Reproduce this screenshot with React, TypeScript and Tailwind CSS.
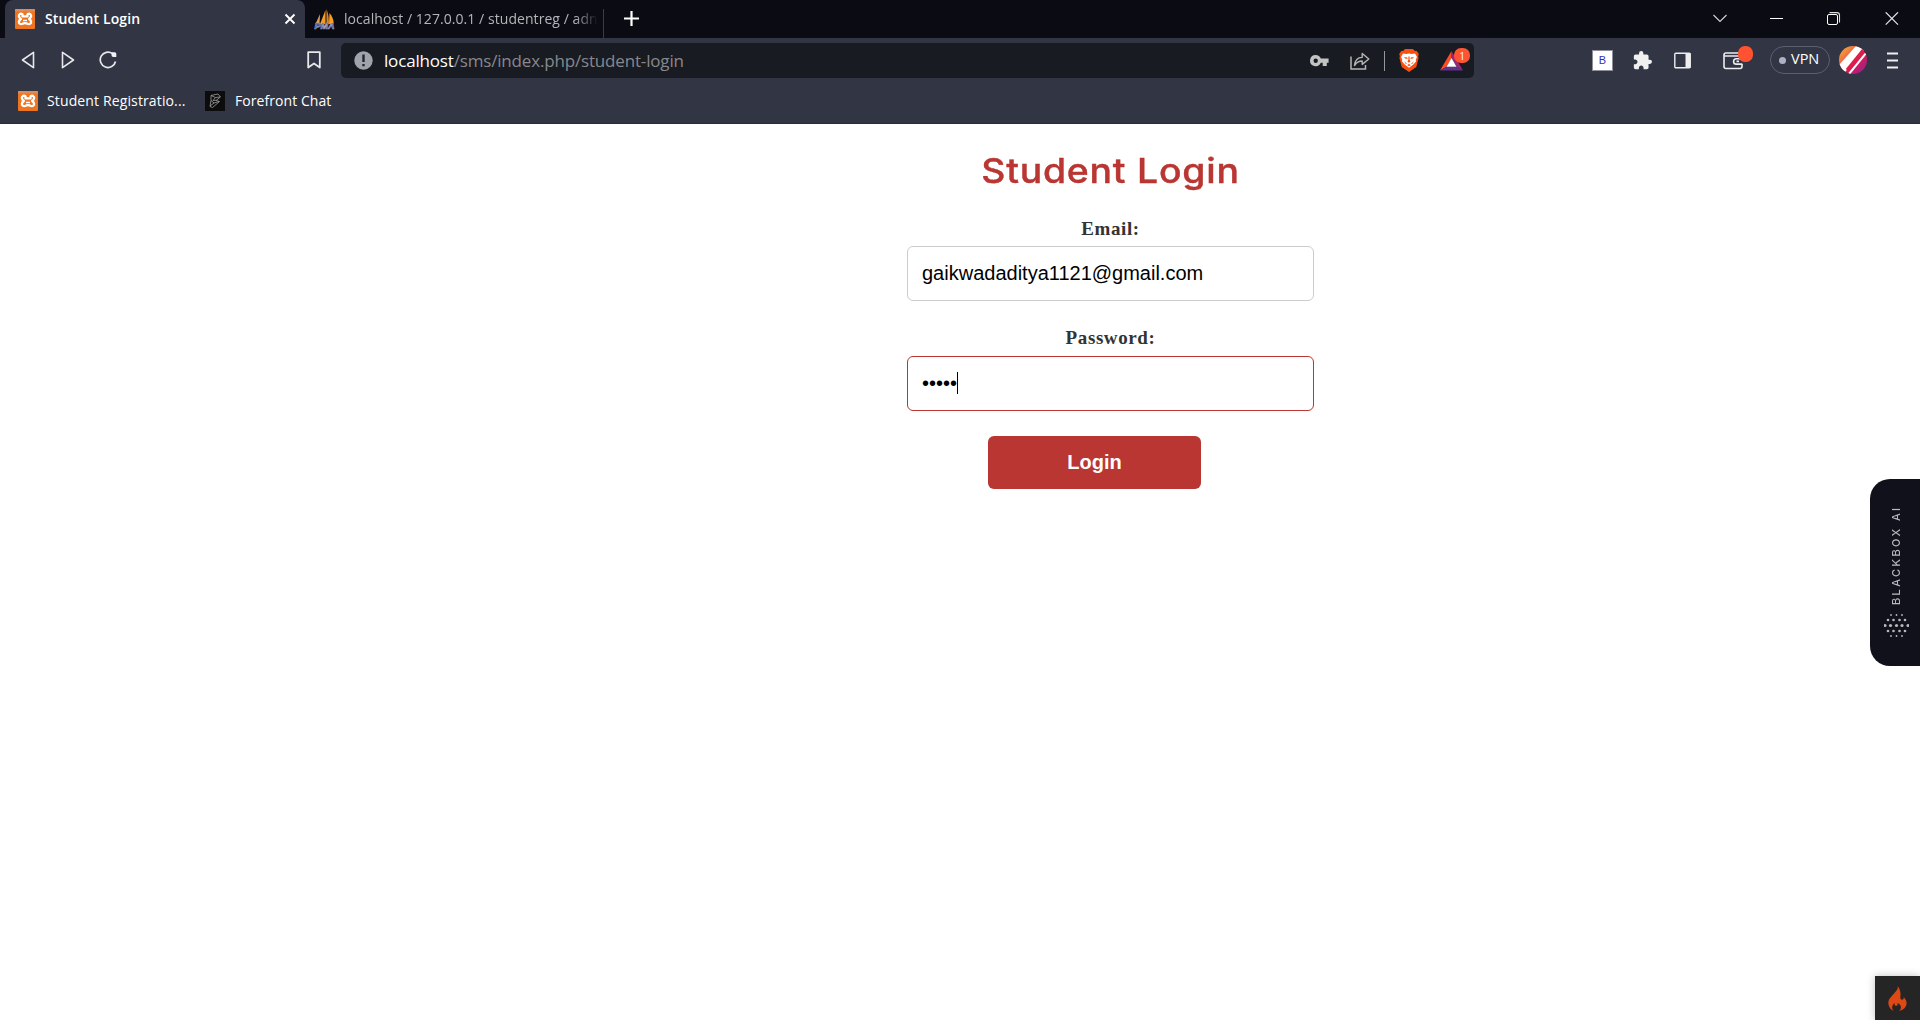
import React from "react";

const ui = "font-['Open_Sans','Noto_Sans',sans-serif]";

function XamppIcon() {
  return (
    <svg width="20" height="20" viewBox="0 0 20 20" className="shrink-0">
      <rect width="20" height="20" rx="1" fill="#ee7420" />
      <rect x="0" y="0" width="20" height="2.500" rx="1" fill="#dd8c58" />
      <path
        d="M7.500 5.200C5.200 4 3.600 5.600 3.900 7.300c.2 1.200 1 2 2 2.700-1 .7-1.800 1.500-2 2.700-.3 1.900 1.800 3 3.600 2.100 1.200-.8 3.800-.8 5 0 1.800.9 3.900-.2 3.600-2.100-.2-1.200-1-2-2-2.700 1-.7 1.800-1.500 2-2.700.3-1.700-1.300-3.300-3.600-2.100v2.200H7.500z"
        fill="none"
        stroke="#fff"
        strokeWidth="2.300"
        strokeLinejoin="round"
      />
      <path d="M8 11.500h4" stroke="#fff" strokeWidth="1.500" />
    </svg>
  );
}

function PmaIcon() {
  return (
    <svg width="22" height="21" viewBox="0 0 22 21" className="shrink-0">
      <path d="M6 5L1.500 15h4z" fill="#d9a05c" />
      <path d="M11.500 1L6 15h5.500z" fill="#f59a22" />
      <path d="M12.500 0c1 3 2.500 6 2.500 15h-2.500z" fill="#e0821c" />
      <path d="M15.500 4c2.500 2.500 4 6.500 4.300 10.500L15 15z" fill="#f99e1f" />
      <text x="0.500" y="20" fontSize="9" fontWeight="700" fontStyle="italic" textLength="20" lengthAdjust="spacingAndGlyphs" fontFamily="Liberation Sans, sans-serif" fill="#232b63" stroke="#a9aed0" strokeWidth=".6">
        PMA
      </text>
    </svg>
  );
}

function TabBar() {
  return (
    <div className="flex h-[38px] bg-[#0b0b14] pl-[5px]">
      <div className="flex w-[300px] items-center rounded-t-lg bg-[#323544] pl-[10px] pr-[8px]">
        <XamppIcon />
        <span className="mb-[2px] ml-[10px] flex-1 whitespace-nowrap text-[14px] font-semibold tracking-[0.12px] text-white">Student Login</span>
        <svg width="12" height="12" viewBox="0 0 12 12" className="mr-px">
          <path d="M1.500 1.500l9 9M10.500 1.500l-9 9" stroke="#fff" strokeWidth="1.900" />
        </svg>
      </div>
      <div className="flex w-[299px] items-center pl-[9px]">
        <PmaIcon />
        <span className="mb-[2px] ml-[8px] w-[254px] overflow-hidden whitespace-nowrap text-[14px] tracking-[0.06px] text-[#b5b5b9] [mask-image:linear-gradient(to_right,#000_91%,transparent)]">
          localhost / 127.0.0.1 / studentreg / adn
        </span>
      </div>
      <div className="mt-[9px] h-[29px] w-px shrink-0 -ml-[1px] bg-[#3c3c42]" />
      <svg width="15" height="15" viewBox="0 0 15 15" className="ml-[20px] mt-[11px]">
        <path d="M7.500 0v15M0 7.500h15" stroke="#fff" strokeWidth="2.200" />
      </svg>
      <div className="ml-auto flex pt-[12px]">
        <svg width="14" height="14" viewBox="0 0 14 14" className="mr-[43px]">
          <path d="M.5 3L7 9.500l6.500-6.500" fill="none" stroke="#d5d5d8" strokeWidth="1.100" />
        </svg>
        <svg width="13" height="14" viewBox="0 0 13 14" className="mr-[44px]">
          <path d="M0 6.500h13" stroke="#fff" />
        </svg>
        <svg width="14" height="14" viewBox="0 0 14 14" className="mr-[44px]">
          <rect x=".5" y="2.500" width="10" height="10" rx="1.500" fill="none" stroke="#fff" />
          <path d="M2.500 .6h7.500a2.500 2.500 0 012.500 2.500V10.500" fill="none" stroke="#ddd" strokeWidth="1.100" />
        </svg>
        <svg width="14" height="14" viewBox="0 0 14 14" className="mr-[21px]">
          <path d="M.7.300l12.300 12.300M13 .300L.7 12.600" stroke="#e6e6e8" strokeWidth="1.200" />
        </svg>
      </div>
    </div>
  );
}

function BraveIcon() {
  return (
    <svg width="20" height="23" viewBox="0 0 20 23">
      <path d="M4.500 1.800L6 0h8l1.500 1.800 2.300.2 2 3-.7 2.200.5 1.600-2.300 9.200L10 23l-7.300-5L.4 8.800.9 7.200.2 5l2-3z" fill="#f9500f" />
      <path d="M4 4.500l3.500.5L10 4.400l2.500.6 3.500-.5 2 3.500-1.200 2.600.2 2-2.700 2.900L10 18.800l-4.300-3.300L3 12.600l.2-2L2 8z" fill="#fff" />
      <path d="M5 8l3.200.5.3 1.400-2.300-.3zM15 8l-3.200.5-.3 1.400 2.300-.3zM8.500 12.800l1.500.9 1.500-.9-.9-2.300V7.500H9.400v3zM5.200 12l1.600 1.800 1.500.7-1.800.3zM14.800 12l-1.600 1.800-1.500.7 1.800.3zM8.200 16l1.800-.9 1.800.9-1.800 1.200z" fill="#f9500f" />
    </svg>
  );
}

function AddressBar() {
  return (
    <div className="ml-[20px] flex h-[35px] w-[1133px] items-center rounded-[5px] bg-[#191b22] pl-[13px]">
      <svg width="19" height="19" viewBox="0 0 19 19">
        <circle cx="9.500" cy="9.500" r="9.200" fill="#a1a3ac" />
        <path d="M9.500 3.500v7.500M9.500 13v2.300" stroke="#24262e" strokeWidth="2.400" />
      </svg>
      <div className="ml-[11px] whitespace-nowrap text-[17px] leading-none tracking-[-0.17px] text-[#87888d]">
        <span className="text-white">localhost</span>/sms/index.php/student-login
      </div>
      <div className="ml-auto flex items-center">
        <svg width="19" height="12" viewBox="0 0 19 12" className="mr-[21px]">
          <path fillRule="evenodd" d="M5.700 0a5.600 5.600 0 015.100 3.600H18.600v4.200h-1.800V11h-4.100V7.800h-1.900A5.600 5.600 0 115.700 0zM5.700 3.500a2.200 2.200 0 100 4.400 2.200 2.200 0 000-4.400z" fill="#c3c3c3" />
        </svg>
        <svg width="20" height="18" viewBox="0 0 20 18" className="mr-[14px]">
          <path d="M1 4.500V17h14.500v-4" fill="none" stroke="#b5b5b7" strokeWidth="1.500" />
          <path d="M4.500 13.500C5 8.500 8 5.500 12.200 5.400V1.500L18.800 7l-6.600 5.400V9C8.800 9 6.500 10.400 4.500 13.500z" fill="none" stroke="#b5b5b7" strokeWidth="1.400" strokeLinejoin="round" />
        </svg>
        <div className="mr-[14px] h-[20px] w-px bg-[#97979b]" />
        <BraveIcon />
        <div className="relative ml-[21px] mr-[4px] h-[23px] w-[30px]">
          <svg width="23" height="20" viewBox="0 0 23 20" className="mt-[2px]">
            <path d="M11.500 0L0 19.500l6.500-3.700 5-8.800z" fill="#ff4c28" />
            <path d="M11.500 0L23 19.500l-6.500-3.700-5-8.800z" fill="#962a78" />
            <path d="M0 19.500h23l-6.500-3.700h-10z" fill="#61318f" />
            <path d="M11.500 7l5 8.800h-10z" fill="#fff" />
          </svg>
          <div className="absolute left-[14px] top-[-1px] flex h-[15px] w-[16px] items-center justify-center rounded-[7px] bg-[#ff5431] text-[10px] leading-none text-white">1</div>
        </div>
      </div>
    </div>
  );
}

function Toolbar() {
  return (
    <div className="flex h-[45px] items-center">
      <svg width="14" height="18" viewBox="0 0 14 18" className="mb-px ml-[21px]">
        <path d="M12.500 1.300v15.400L1.500 9z" fill="none" stroke="#e8e8eb" strokeWidth="1.600" strokeLinejoin="round" />
      </svg>
      <svg width="14" height="18" viewBox="0 0 14 18" className="mb-px ml-[26px]">
        <path d="M1.500 1.300v15.400L12.500 9z" fill="none" stroke="#e8e8eb" strokeWidth="1.600" strokeLinejoin="round" />
      </svg>
      <svg width="18" height="18" viewBox="0 0 18 18" className="mb-px ml-[24px]">
        <path d="M13.500 2.600A7.700 7.700 0 1016.500 10.500" fill="none" stroke="#e8e8eb" strokeWidth="1.700" />
        <path d="M12.500 1.200h3.200a1.600 1.600 0 011.600 1.600V6h-3a1.800 1.800 0 01-1.800-1.800z" fill="#f2f2f4" />
      </svg>
      <svg width="14" height="18" viewBox="0 0 14 18" className="mb-px ml-[190px]">
        <path d="M1.200 1.200h11.600v15.300L7 12.500l-5.800 4z" fill="none" stroke="#e8e8eb" strokeWidth="1.800" strokeLinejoin="round" />
      </svg>
      <AddressBar />
      <div className="ml-auto flex items-center">
        <div className="mr-[20px] flex h-[21px] w-[21px] items-center justify-center border border-[#8e8f98] bg-white font-['Liberation_Sans',sans-serif] text-[11px] text-[#3430b5]">B</div>
        <svg width="19" height="19" viewBox="1 1 22 22" className="mr-[22px]">
          <path d="M20.500 11H19V7c0-1.100-.9-2-2-2h-4V3.500a2.500 2.500 0 00-5 0V5H4c-1.100 0-2 .9-2 2v3.800h1.500c1.500 0 2.700 1.200 2.700 2.700s-1.200 2.700-2.700 2.700H2V20c0 1.100.9 2 2 2h3.800v-1.500c0-1.500 1.200-2.700 2.700-2.700s2.700 1.200 2.700 2.700V22H17c1.100 0 2-.9 2-2v-4h1.500a2.500 2.500 0 000-5z" fill="#f0f0f0" />
        </svg>
        <svg width="17" height="17" viewBox="0 0 17 17" className="mb-px mr-[32px]">
          <rect x=".8" y="1.300" width="15.400" height="14.400" rx="1" fill="none" stroke="#eee" strokeWidth="1.400" />
          <rect x="11.500" y="1" width="5" height="15" fill="#eee" />
        </svg>
        <div className="relative mr-[17px] h-[19px] w-[30px]">
          <svg width="20" height="19" viewBox="0 0 20 19">
            <path d="M19 8V5.500A2.500 2.500 0 0016.500 2H3a2 2 0 00-2 2v11.500a2 2 0 002 2h14a2 2 0 002-2V13M1 5h17" fill="none" stroke="#ededf0" strokeWidth="1.600" />
            <path d="M19.300 7.700h-6a2.700 2.700 0 000 5.400h6M16 10.400h-2.500" fill="none" stroke="#ededf0" strokeWidth="1.600" />
          </svg>
          <div className="absolute left-[15px] top-[-5px] h-[16px] w-[15px] rounded-[7px] bg-[#ff5230]" />
        </div>
        <div className="mb-px mr-[9px] flex h-[28px] w-[60px] items-center rounded-full border border-[#5c5f70] pl-[8px]">
          <div className="h-[7px] w-[7px] rounded-full bg-[#aeb0c3]" />
          <span className="mb-px ml-[5px] text-[14.500px] leading-none text-white">VPN</span>
        </div>
        <svg width="28" height="28" viewBox="0 0 28 28" className="mb-px mr-[20px]">
          <defs>
            <clipPath id="avatar"><circle cx="14" cy="14" r="14" /></clipPath>
            <linearGradient id="avatarFill" x1="0" y1="0" x2="1" y2="1">
              <stop offset=".15" stopColor="#f39a3b" />
              <stop offset=".35" stopColor="#ee6545" />
              <stop offset=".55" stopColor="#e21c4a" />
              <stop offset=".85" stopColor="#a71e83" />
            </linearGradient>
          </defs>
          <g clipPath="url(#avatar)">
            <rect width="28" height="28" fill="url(#avatarFill)" />
            <path d="M17 0L-1 20l7 6L26 3z" fill="#fff" />
            <path d="M25 3L8 24" stroke="#df1d49" strokeWidth="3" />
            <path d="M28 6L10 28" stroke="#fff" strokeWidth="2" />
          </g>
        </svg>
        <svg width="11" height="17" viewBox="0 0 11 17" className="mb-px mr-[22px]">
          <path d="M0 1.500h11M0 8.500h11M0 15.500h11" stroke="#f0f0f2" strokeWidth="1.800" />
        </svg>
      </div>
    </div>
  );
}

function Bookmarks() {
  return (
    <div className="flex h-[35px] items-center pl-[18px] text-[14px] text-white">
      <XamppIcon />
      <span className="ml-[9px] w-[158px] whitespace-nowrap tracking-[0.13px]">Student Registratio...</span>
      <svg width="20" height="20" viewBox="0 0 20 20" className="shrink-0">
        <rect width="20" height="20" fill="#0c0c0d" />
        <path d="M6 4.500l7-1.500 2.500 3-4.500 3.500 3.500 1-7 6-2.500-1L6 9.500zM6 4.500l4.500 2L15 6M10.500 6.500L8 9.500l3-.200M6 9.500l3 2.500-4 3M9 12l5-1.500" fill="none" stroke="#a0a0a0" strokeWidth=".8" />
      </svg>
      <span className="ml-[10px] whitespace-nowrap tracking-[0.06px]">Forefront Chat</span>
    </div>
  );
}

function LoginForm() {
  return (
    <main className="ml-[907px] flex w-[407px] flex-col">
      <h1 className="mt-[23px] h-[49px] origin-center scale-x-[1.1] whitespace-nowrap text-center font-['Inter',sans-serif] text-[34px] font-medium leading-[48px] tracking-[0.7px] text-[#b93632] [-webkit-text-stroke:0.4px_#b93632]">Student Login</h1>
      <label className="mt-[20px] h-[30px] text-center font-['Liberation_Serif',serif] text-[19px] font-bold leading-[26px] tracking-[0.6px] text-[#333]">Email:</label>
      <div className="flex h-[55px] items-center rounded-[6px] border border-[#ccc] pl-[14px] pb-[2px] font-['Liberation_Sans',sans-serif] text-[20px] text-black">gaikwadaditya1121@gmail.com</div>
      <label className="mt-[24px] h-[31px] text-center font-['Liberation_Serif',serif] text-[19px] font-bold leading-[26px] tracking-[0.6px] text-[#333]">Password:</label>
      <div className="flex h-[55px] items-center rounded-[6px] border border-[#b93632] pl-[14px] pb-[2px] font-['Liberation_Sans',sans-serif] text-[20px] text-black">
        •••••<span className="h-[22px] w-px bg-black" />
      </div>
      <button className="ml-[81px] mt-[25px] h-[53px] w-[213px] rounded-[6px] bg-[#b93632] pb-[2px] font-['Liberation_Sans',sans-serif] text-[20px] font-bold text-white">Login</button>
    </main>
  );
}

const dotRows: { y: number; xs: number[]; r: number }[] = [
  { y: 2, xs: [7, 12.5, 18], r: 0.9 },
  { y: 7, xs: [4, 9.500, 15.500, 21], r: 1.300 },
  { y: 12.5, xs: [1, 6.500, 12.5, 18, 24], r: 1.600 },
  { y: 18, xs: [4, 9.500, 15.500, 21], r: 1.300 },
  { y: 23, xs: [7, 12.5, 18], r: 0.9 },
];

export default function App() {
  return (
    <div className={`relative h-[1020px] w-[1920px] overflow-hidden bg-white ${ui}`}>
      <header className="h-[124px] border-b border-[#292b37] bg-[#323544]">
        <TabBar />
        <Toolbar />
        <Bookmarks />
      </header>
      <LoginForm />
      <aside className="absolute right-0 top-[479px] flex h-[187px] w-[50px] flex-col items-center rounded-l-[20px] bg-[#10111a] pt-[25px]">
        <span className="ml-[1px] h-[101px] rotate-180 whitespace-nowrap font-['Inter',sans-serif] text-[11px] font-medium leading-[14px] tracking-[2.400px] text-[#b8b8bc] [writing-mode:vertical-rl]">BLACKBOX AI</span>
        <svg width="25" height="25" viewBox="0 0 25 25" className="ml-[2px] mt-[8px] shrink-0">
          {dotRows.map((row) => row.xs.map((x) => <circle key={`${row.y}-${x}`} cx={x} cy={row.y} r={row.r} fill="#b8b8bc" />))}
        </svg>
      </aside>
      <div className="absolute bottom-0 right-0 flex h-[44px] w-[45px] bg-[#252525] shadow-[0_0_8px_rgba(0,0,0,0.25)]">
        <svg width="19" height="25" viewBox="0 0 19 25" className="ml-[13px] mt-[10px]">
          <path d="M9.500 0c1 3-1 4.500-3.500 7.500C3 11 0 13.500.4 17.700.7 21 2.700 23.800 5.700 25c-2.500-3-1.600-6 .8-8-.2 2 .6 2.800 1.600 2.800 1.700 0 1.700-1.600 1.300-2.900 2 .7 3.700 2.300 3.500 4.600-.1 1.500-.8 2.600-1.900 3.500 4-.7 7.500-3.600 7.600-7.700.1-2.600-1.300-4.400-2.900-6.300.1 1.600-.3 2.700-1.600 2.700-2.900 0-1-3.800-1.700-7C12 3.800 11 1.500 9.500 0z" fill="#dd4814" />
        </svg>
      </div>
    </div>
  );
}
